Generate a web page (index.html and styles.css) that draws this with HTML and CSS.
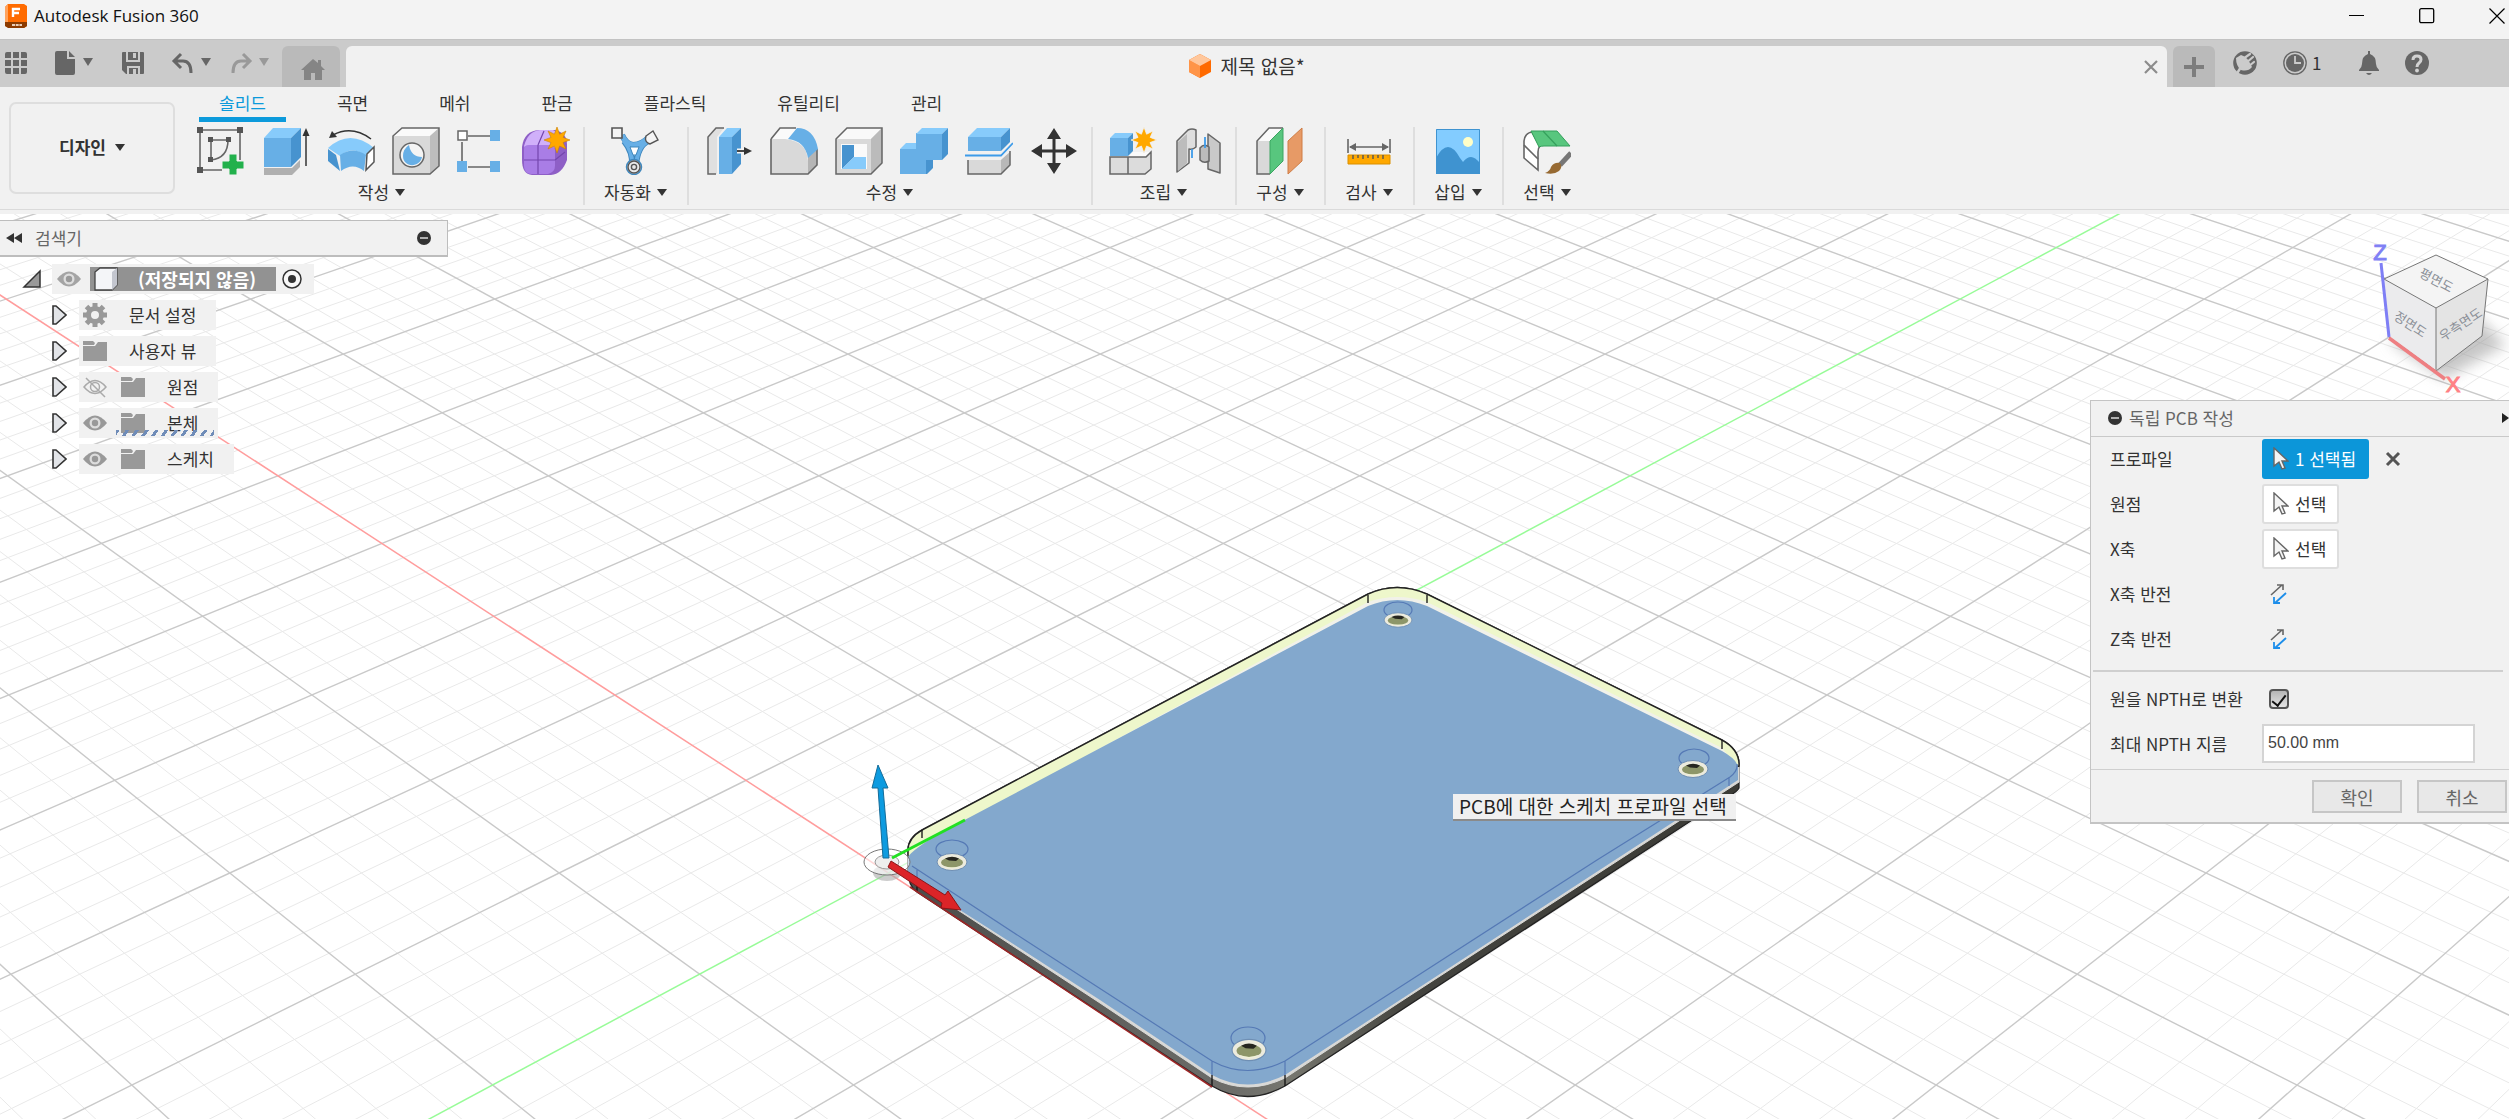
FILE: index.html
```html
<!DOCTYPE html>
<html lang="ko">
<head>
<meta charset="utf-8">
<title>Autodesk Fusion 360</title>
<link rel="stylesheet" href="styles.css">
</head>
<body>
<header class="titlebar">
  <svg class="app-logo" viewBox="0 0 22 24"><path d="M3 0h16l3 2v20l-3 2H5l-5-2V3z" fill="#ff6b00"/><path d="M0 3l3-3v18l-3 2z" fill="#ffa25c"/><path d="M0 18h22v4l-3 2H3l-3-2z" fill="#8c3a00"/><path d="M8 13V5h7M8 9h6" stroke="#fff" stroke-width="2.400" fill="none"/><path d="M7 21h10" stroke="#e8cdb8" stroke-width="2" stroke-dasharray="3 .7"/></svg>
  <h1 class="app-name">Autodesk Fusion 360</h1>
  <div class="window-buttons">
    <button class="plain" aria-label="최소화"><svg class="i16" viewBox="0 0 16 16"><path d="M0 7.500h15" stroke="#000"/></svg></button>
    <button class="plain" aria-label="최대화"><svg class="i16" viewBox="0 0 16 16"><rect x=".7" y=".7" width="14" height="14" rx="1.500" fill="none" stroke="#000" stroke-width="1.300"/></svg></button>
    <button class="plain" aria-label="닫기"><svg class="i16" viewBox="0 0 16 16"><path d="M.5.5l15 15M15.500.5l-15 15" stroke="#000" stroke-width="1.200"/></svg></button>
  </div>
</header>

<div class="tabbar">
  <div class="quick">
    <button class="plain" aria-label="앱"><svg class="i24" viewBox="0 0 24 24" fill="#666"><path d="M3 1h4v6H1V3a2 2 0 0 1 2-2zM9 1h6v6H9zM17 1h4a2 2 0 0 1 2 2v4h-6zM1 9h6v6H1zM9 9h6v6H9zM17 9h6v6h-6zM1 17h6v6H3a2 2 0 0 1-2-2zM9 17h6v6H9zM17 17h6v4a2 2 0 0 1-2 2h-4z"/></svg></button>
    <button class="plain pair file" aria-label="파일"><svg class="i24" viewBox="0 0 24 24"><path d="M2 2q0-2 2-2h10v8h8v14q0 2-2 2H4q-2 0-2-2zM16 0l6 6h-6z" fill="#666"/></svg><span class="caret"></span></button>
    <button class="plain save" aria-label="저장"><svg class="i24" viewBox="0 0 24 24"><path d="M2 1h20a1 1 0 0 1 1 1v20a1 1 0 0 1-1 1H5l-4-4V2a1 1 0 0 1 1-1z" fill="#666"/><path d="M6 1v9h12V1M7 23v-7h11v7" fill="none" stroke="#cbcbcb" stroke-width="2"/><path d="M12 18h3v5h-3zM12 2h3v5h-3z" fill="#cbcbcb"/></svg></button>
    <button class="plain pair undo" aria-label="실행 취소"><svg class="i24" viewBox="0 0 24 24"><path d="M10 3L3 10l7 7M4 10h8q8 0 8 12" fill="none" stroke="#666" stroke-width="3"/></svg><span class="caret"></span></button>
    <button class="plain pair redo" aria-label="다시 실행"><svg class="i24" viewBox="0 0 24 24"><path d="M14 3l7 7-7 7M20 10h-8q-8 0-8 12" fill="none" stroke="#999" stroke-width="3"/></svg><span class="caret caret-dim"></span></button>
  </div>
  <button class="tab-home" aria-label="홈"><svg class="i24" viewBox="0 0 24 24"><path d="M12 2L0 13h3v10h7v-7h4v7h7V13h3l-4-4V3h-3v3z" fill="#858585"/></svg></button>
  <div class="doc-tab">
    <div class="doc-title"><svg class="i24" viewBox="0 0 24 24"><path d="M12 0l11 6v12l-11 6L1 18V6z" fill="#ff6a00"/><path d="M1 6l11 6v12L1 18z" fill="#ff9447"/><path d="M12 0l11 6-11 6L1 6z" fill="#ffc79c"/></svg><span>제목 없음*</span></div>
    <button class="plain" aria-label="탭 닫기"><svg class="i16" viewBox="0 0 16 16"><path d="M2 2l12 12M14 2L2 14" stroke="#8c8c8c" stroke-width="2.200"/></svg></button>
  </div>
  <button class="tab-add" aria-label="새 탭"><svg class="i24" viewBox="0 0 24 24"><path d="M12 2v20M2 12h20" stroke="#7d7d7d" stroke-width="4"/></svg></button>
  <div class="status">
    <button class="plain" aria-label="확장"><svg class="i24" viewBox="0 0 24 24"><circle cx="12" cy="12" r="11.800" fill="#666"/><path d="M3 7L8 4q6 1 11 12-4 5-11 3-5-4-5-12z" fill="#cbcbcb"/><path d="M10 8l7-5M13 12l7-6M16 15l5-4" stroke="#cbcbcb" stroke-width="2.200" stroke-linecap="round"/><path d="M8 16l-5 8" stroke="#cbcbcb" stroke-width="2.500"/></svg></button>
    <button class="plain jobs"><svg class="i24" viewBox="0 0 24 24"><circle cx="12" cy="12" r="11.200" fill="none" stroke="#666" stroke-width="1.300"/><circle cx="12" cy="12" r="9" fill="#666"/><path d="M12 5v7h6" fill="none" stroke="#cbcbcb" stroke-width="1.800"/></svg><span>1</span></button>
    <button class="plain bell" aria-label="알림"><svg class="i24" viewBox="0 0 24 24"><path d="M11 0h2v3q6 2 6 10 0 3 3 6v1H2v-1q3-3 3-6 0-8 6-10zM9 22h6q-3 4-6 0z" fill="#666"/></svg></button>
    <button class="plain" aria-label="도움말"><svg class="i24" viewBox="0 0 24 24"><circle cx="12" cy="12" r="12" fill="#666"/><path d="M8 9q0-4 4-4t4 3.500q0 2-2 3.500-2 1.500-2 4" fill="none" stroke="#d2d2d2" stroke-width="3"/><circle cx="12" cy="19.500" r="1.900" fill="#d2d2d2"/></svg></button>
  </div>
</div>

<section class="ribbon">
  <button class="workspace">디자인 <span class="caret caret-dark"></span></button>
  <div class="tools">
    <nav class="ribbon-tabs">
      <button class="rtab rtab-on">솔리드</button><button class="rtab">곡면</button><button class="rtab">메쉬</button><button class="rtab">판금</button><button class="rtab">플라스틱</button><button class="rtab">유틸리티</button><button class="rtab">관리</button>
    </nav>
    <div class="groups">
      <div class="group group-first">
        <div class="icons">
          <svg viewBox="0 0 48 48"><path d="M3 3h40v30M3 3v40h22M14 13h17M14 13v20M31 13q0 18-17 20" fill="none" stroke="#666" stroke-width="1.600"/><path d="M0 0h6v6H0zM40 0h6v6h-6zM0 40h6v6H0zM11 10h5v5h-5zM29 10h5v5h-5zM11 30h5v5h-5z" fill="#555"/><path d="M25 34h7v-7h8v7h7v8h-7v6h-8v-6h-7z" fill="#22b14c" stroke="#f1f1f1" stroke-width="1"/></svg>
          <svg viewBox="0 0 48 48"><path d="M2 41h28l8-8v7l-8 8H2z" fill="#b0b0b0"/><path d="M2 11h27v29H2z" fill="#67afe6"/><path d="M2 11L11 1h28L29 11z" fill="#87cbfb"/><path d="M29 11L39 1v29L29 40z" fill="#4793cf"/><path d="M44 39V6" stroke="#333" stroke-width="1.500"/><path d="M44 1l3.500 8h-7z" fill="#333"/></svg>
          <svg viewBox="0 0 48 48"><path d="M1 22l8 6 4 16L1 34z" fill="#4793cf"/><path d="M1 21q22-20 46 0l-8 8q-14-11-26 0z" fill="#87cbfb"/><path d="M13 28q13-9 26 0l-2 16q-11-9-23 0z" fill="#67afe6"/><path d="M40 27l7-7v15l-8 8z" fill="#fff" stroke="#555" stroke-width="1.500"/><path d="M6 8q19-10 38 4" fill="none" stroke="#333" stroke-width="1.500"/><path d="M2 11l3-7 5 6z" fill="#333"/></svg>
          <svg viewBox="0 0 48 48"><path d="M1 9L10 1h37v38l-9 8H1z" fill="#d9d9d9"/><path d="M1 9L10 1h37l-9 8z" fill="#fafafa"/><path d="M38 9l9-8v38l-9 8z" fill="#bdbdbd"/><path d="M1 9L10 1h37v38l-9 8H1z" fill="none" stroke="#666" stroke-width="1.500"/><ellipse cx="20" cy="28" rx="12" ry="12" fill="#f4f4f4" stroke="#666" stroke-width="1.500"/><path d="M17 18q2 12 13 12c-2 11-19 11-19-1q0-7 6-11z" fill="#67afe6"/></svg>
          <svg viewBox="0 0 48 48"><path d="M11 9h22M5 15v20M11 40h22" stroke="#666" stroke-width="1.600"/><path d="M1 4h9v9H1z" fill="#fff" stroke="#666" stroke-width="1.500"/><path d="M33 3h10v11H33zM0 34h10v11H0zM33 34h10v11H33z" fill="#67afe6"/></svg>
          <svg viewBox="0 0 48 48"><path d="M0 20Q2 4 17 3h16q12 3 12 14v16q-5 14-16 15H10Q0 47 0 33z" fill="#8e5fc6"/><path d="M2 19Q6 4 18 3h13q8 3 9 12l-8 6H3z" fill="#d0b0fa"/><path d="M2 22q0-4 5-4h20q6 0 6 5v16q0 6-7 8H9q-7-1-7-8z" fill="#a97de6"/><path d="M16 18v29M2 33h31M33 33l10-8M16 18l6-14" stroke="#7446ad" stroke-width="1.200" fill="none"/><path d="M35 0l2.600 7.200L44 4l-2.800 6.400L48 13l-7 2.600L44 22l-6.400-3L35 26l-2.600-7L26 22l3-6.400L22 13l7-2.600L26 4l6.400 3.200z" fill="#ffa800" stroke="#c98200" stroke-width=".6"/></svg>
        </div>
        <button class="caption">작성<span class="caret caret-dark"></span></button>
      </div>
      <div class="group group-narrow">
        <div class="icons"><svg viewBox="0 0 48 48"><path d="M11 8q4 9 11 10 9 0 16-8M13 14q9 11 8 24M38 14q-11 4-13 24" fill="none" stroke="#3f87bd" stroke-width="6"/><path d="M11 8q4 9 11 10 9 0 16-8" fill="none" stroke="#67afe6" stroke-width="5"/><path d="M13 14q9 11 8 24M38 14q-11 4-13 24" fill="none" stroke="#67afe6" stroke-width="4"/><path d="M19 20h9l-3 8h-3z" fill="#fff" stroke="#3f87bd"/><path d="M1 1h10v10H1z" fill="#f4f4f4" stroke="#555" stroke-width="1.600"/><path d="M35 9l7-5 5 9-8 4q-6-2-4-8z" fill="#f4f4f4" stroke="#555" stroke-width="1.400"/><circle cx="23" cy="40" r="7.500" fill="#ddd" stroke="#3f87bd" stroke-width="1.500"/><circle cx="23" cy="40" r="6" fill="#e9e9e9" stroke="#555" stroke-width="1.400"/><circle cx="23" cy="40" r="2.600" fill="none" stroke="#555" stroke-width="1.400"/></svg></div>
        <button class="caption">자동화<span class="caret caret-dark"></span></button>
      </div>
      <div class="group">
        <div class="icons">
          <svg viewBox="0 0 48 48"><path d="M3 10l8-9h8l-7 9v37H3z" fill="#e0e0e0"/><path d="M11 47H3V10l8-9h8" fill="none" stroke="#666" stroke-width="1.500"/><path d="M14 10h13v37H14z" fill="#67afe6"/><path d="M14 10l8-9h14l-9 9z" fill="#87cbfb"/><path d="M27 10l9-9v36l-9 10z" fill="#4793cf"/><path d="M32 24h11" stroke="#f4f4f4" stroke-width="5"/><path d="M32 24h10" stroke="#333" stroke-width="1.800"/><path d="M39 20l8 4-8 4z" fill="#333"/></svg>
          <svg viewBox="0 0 48 48"><path d="M1 11L10 1h15q20 5 22 23v14l-9 9H1z" fill="#fafafa"/><path d="M1 12h14q22 2 23 22v13H1z" fill="#d9d9d9"/><path d="M38 30l9-8v16l-9 9z" fill="#b5b5b5"/><path d="M1 12L10 1h16M47 22v16l-9 9H1V12" fill="none" stroke="#666" stroke-width="1.600"/><path d="M18 12L27 1q17 0 21 21l-10 9Q35 14 18 12z" fill="#67afe6"/></svg>
          <svg viewBox="0 0 48 48"><path d="M1 12L12 1h35v35L36 47H1z" fill="#d9d9d9"/><path d="M1 12L12 1h35L36 12z" fill="#f9f9f9"/><path d="M36 12L47 1v35L36 47z" fill="#bbb"/><path d="M1 12L12 1h35v35L36 47H1z" fill="none" stroke="#666" stroke-width="1.500"/><path d="M6 17h26v25H6z" fill="#fafafa"/><path d="M7 18h12v12L7 42z" fill="#4793cf"/><path d="M7 42l12-12h12v12z" fill="#87cbfb"/></svg>
          <svg viewBox="0 0 48 48"><path d="M0 22h16V6h26v27H26v14H0z" fill="#67afe6"/><path d="M16 7l6-6h26l-6 6zM0 22l6-6h10v6z" fill="#87cbfb"/><path d="M42 7l6-6v26l-6 6zM26 33h7v8l-6 6h-1z" fill="#4793cf"/></svg>
          <svg viewBox="0 0 48 48"><path d="M3 33h33l9-8v13l-9 9H3z" fill="#d9d9d9"/><path d="M36 33l9-8v13l-9 9z" fill="#b8b8b8"/><path d="M3 33v14h33l9-9V24" fill="none" stroke="#666" stroke-width="1.500"/><path d="M3 10h33v14H3z" fill="#67afe6"/><path d="M3 10l9-9h33l-9 9z" fill="#87cbfb"/><path d="M36 10l9-9v14l-9 9z" fill="#4793cf"/><path d="M0 28.500h36L48 16" fill="none" stroke="#3d9be9" stroke-width="1.800"/></svg>
          <svg viewBox="0 0 48 48"><path d="M24 8v32M8 24h32" stroke="#333" stroke-width="3"/><path d="M24 1l7 11H17zM24 47l-7-11h14zM1 24l11-7v14zM47 24l-11 7V17z" fill="#333"/></svg>
        </div>
        <button class="caption">수정<span class="caret caret-dark"></span></button>
      </div>
      <div class="group">
        <div class="icons">
          <svg viewBox="0 0 48 48"><path d="M1 30h36l5-5v17l-6 5H1z" fill="#dcdcdc"/><path d="M19 30l5-5h18l-5 5z" fill="#fafafa"/><path d="M1 30h36l5-5v17l-6 5H1zM19 30v17" fill="none" stroke="#666" stroke-width="1.500"/><path d="M1 11h18v18H1z" fill="#67afe6"/><path d="M1 11l5-5h18l-5 5z" fill="#87cbfb"/><path d="M19 11l5-5v18l-5 5z" fill="#4793cf"/><path d="M35 0l2.600 7.200L44 4l-2.800 6.400L48 13l-7 2.600L44 22l-6.400-3L35 26l-2.600-7L26 22l3-6.400L22 13l7-2.600L26 4l6.400 3.200z" fill="#ffa800" stroke="#f1f1f1" stroke-width=".8"/></svg>
          <svg viewBox="0 0 48 48"><path d="M3 14L14 3q4-2 8 0v17q-3 3-7 2v14L3 45z" fill="#dedede" stroke="#666" stroke-width="1.500" stroke-linejoin="round"/><path d="M4 15l9-8v29l-9 8z" fill="#bcbcbc"/><path d="M46 16L34 7v35l12 4z" fill="#c9c9c9" stroke="#666" stroke-width="1.500" stroke-linejoin="round"/><path d="M26 21q4-5 9-1v14q-5 3-9-1z" fill="#bcbcbc" stroke="#666" stroke-width="1.500"/><path d="M18 22v9M31 10v11" stroke="#3d9be9" stroke-width="1.800"/></svg>
        </div>
        <button class="caption">조립<span class="caret caret-dark"></span></button>
      </div>
      <div class="group group-narrow">
        <div class="icons"><svg viewBox="0 0 48 48"><path d="M1 14L13 1h14v33L14 47H1z" fill="#fafafa"/><path d="M1 14h13v33H1z" fill="#d9d9d9"/><path d="M14 47H1V14L13 1h14" fill="none" stroke="#666" stroke-width="1.500"/><path d="M14 14L27 1v33L14 47z" fill="#58c67e" stroke="#3ba561"/><path d="M32 14L46 1v33L32 47z" fill="#e79a66" stroke="#cf7d45"/></svg></div>
        <button class="caption">구성<span class="caret caret-dark"></span></button>
      </div>
      <div class="group group-narrow">
        <div class="icons"><svg viewBox="0 0 48 48"><path d="M3 12v14M45 12v14M5 20h38" stroke="#666" stroke-width="1.600"/><path d="M4 20l7-4v8zM44 20l-7-4v8z" fill="#666"/><path d="M3 28h42v9H3z" fill="#ffa800" stroke="#d98f00"/><path d="M8 28v4M13 28v3M18 28v4M23 28v3M28 28v4M33 28v3M38 28v4" stroke="#555" stroke-width="1.400"/></svg></div>
        <button class="caption">검사<span class="caret caret-dark"></span></button>
      </div>
      <div class="group group-narrow">
        <div class="icons"><svg viewBox="0 0 48 48"><path d="M2 2h44v45H2z" fill="#83ccff"/><path d="M2 31q12-22 24 0l3 4q4-5 8-5 4 0 9 6v11H2z" fill="#3f93d0"/><circle cx="34" cy="15" r="5" fill="#ffffc8"/><path d="M2.500 2.500h43v44h-43z" fill="none" stroke="#3f93d0"/></svg></div>
        <button class="caption">삽입<span class="caret caret-dark"></span></button>
      </div>
      <div class="group group-narrow group-last">
        <div class="icons"><svg viewBox="0 0 48 48"><path d="M1 31V14q1-8 8-9l8 14q-2 2-2 6v18z" fill="#fff" stroke="#666" stroke-width="1.600"/><path d="M1 18l14 14" stroke="#666" stroke-width="1.600"/><path d="M8 4h26l13 15H21q-3 0-5 1z" fill="#58c67e" stroke="#35a05c"/><path d="M20 4l14 15" stroke="#35a05c" stroke-width="1.200"/><path d="M48 26L37 38" stroke="#777" stroke-width="5"/><path d="M22 46q5-2 6-6 3-5 9-4 3 4-1 8-5 4-14 2z" fill="#976a32"/></svg></div>
        <button class="caption">선택<span class="caret caret-dark"></span></button>
      </div>
    </div>
  </div>
</section>

<main class="viewport">
  <svg class="scene" viewBox="0 214 2509 905" preserveAspectRatio="xMinYMin slice">
    <defs>
      <linearGradient id="rim" x1="0" x2="1"><stop offset="0" stop-color="#4c4c4a"/><stop offset=".4" stop-color="#6e6e6a"/><stop offset=".46" stop-color="#77776f"/><stop offset=".6" stop-color="#44443f"/><stop offset="1" stop-color="#3b3b36"/></linearGradient>
      <g id="hole"><ellipse rx="15" ry="8.500" fill="#ecebdd" stroke="#6f8fb4"/><ellipse cy=".5" rx="11" ry="5" fill="#8d9669"/><path d="M-7-3.500Q0-7 7-3.500L4-1-3-1.500z" fill="#26261f"/><path d="M-9 4Q0 8 9 4 0 7-9 4z" fill="#f6ffd0"/></g>
    </defs>
    <g id="grid-minor" stroke="#e9e9e9"></g>
    <g id="grid-major" stroke="#c9c9c9" stroke-width="1.400"></g>
    <g id="axes" stroke-width="1.500"></g>
    <path d="M908 870V850Q908 838 922 830L1368 594Q1397 581 1427 594L1722 740Q1740 750 1739 766V788Q1737 792 1729 796L1285 1086Q1247 1107 1212 1086L917 892Q908 886 908 870z" fill="url(#rim)" stroke="#222" stroke-width="1.300"/>
    <path d="M908 870V850Q908 838 922 830L1368 594Q1397 581 1427 594L1722 740Q1740 750 1739 766V782L1400 1002 1285 1078Q1247 1096 1212 1078L1100 1003 912 880z" fill="#d9d9d7" stroke="#d9d9d7"/>
    <path d="M908 866V850Q908 838 922 830L1368 594Q1397 581 1427 594L1722 740Q1740 750 1739 766L1560 800 1100 860z" fill="#eef7cb" stroke="#222" stroke-width="1.500"/>
    <path d="M911 856L965 822 1368 602Q1397 592 1427 602L1722 748 1735 764 1560 800 1000 860z" fill="#f1f1ea"/>
    <path d="M908 857Q912 850 940 833L1368 606Q1397 594 1427 606L1722 751Q1738 760 1738 768V780L1615 860 1400 1000 1285 1075Q1247 1094 1212 1075L1100 1000 1007 940 908 877z" fill="#83a8cd"/>
    <g fill="none" stroke="#5579b5" stroke-width="1.200"><path d="M912 866L1025 940 1212 1061Q1247 1080 1285 1061L1400 987 1597 860 1730 777Q1738 771 1737 764M1212 1061v14M1285 1061v14M1729 777v9M917 870v14"/><ellipse cx="952" cy="849" rx="16" ry="9"/><ellipse cx="1398" cy="610" rx="14" ry="8"/><ellipse cx="1694" cy="758" rx="15" ry="9"/><ellipse cx="1248" cy="1038" rx="17" ry="11"/></g>
    <path d="M1212 1075v11M1285 1075v11M917 884v8M922 830v8M1368 595v8M1427 595v8M1722 740v9" stroke="#111" stroke-width="1.300"/>
    <path d="M910 887L1212 1087" stroke="#9c2626" stroke-width="1.500"/>
    <use href="#hole" x="952" y="862"/><use href="#hole" transform="translate(1398 620) scale(.93 .85)"/><use href="#hole" x="1693" y="769"/><use href="#hole" transform="translate(1249 1050) scale(1.130 1.250)"/>
    <g>
      <ellipse cx="887" cy="873" rx="14" ry="8" fill="#aaa" opacity=".6"/><ellipse cx="887" cy="862" rx="23" ry="13" fill="#fff" fill-opacity=".6" stroke="#777"/><ellipse cx="887" cy="862" rx="12" ry="7" fill="#eee" stroke="#999"/>
      <path d="M892 858L965 820" stroke="#22e022" stroke-width="3"/>
      <path d="M883 858l-5-70h-6l6-23 10 23h-5l6 70z" fill="#0d9be0" stroke="#146c99"/>
      <path d="M891 861l54 34 3-4 13 19-20-2 1-5-54-36z" fill="#db2428" stroke="#8b1518"/>
    </g>
  </svg>

  <svg class="viewcube" viewBox="0 0 140 160">
    <defs><filter id="soft" x="-30%" y="-50%" width="160%" height="200%"><feGaussianBlur stdDeviation="7"/></filter></defs>
    <path d="M20 112l55 38 62-34-30-30z" fill="#999" opacity=".55" filter="url(#soft)"/>
    <path d="M67 26l52 24-52 29L15 50z" fill="#f4f4f4"/><path d="M15 50l52 29v63l-47-34z" fill="#ebebed"/><path d="M67 79l52-29-6 57-46 35z" fill="#e4e4e4"/>
    <path d="M67 26l52 24-52 29L15 50zM67 79v63M119 50l-6 57-46 35-47-34" fill="none" stroke="#777"/>
    <path d="M12 34l8 74" stroke="#7f7ff5" stroke-width="3"/><path d="M20 109l56 41" stroke="#ee7f82" stroke-width="3.500"/>
    <g class="cube-text"><text x="67" y="56" transform="rotate(28 67 52)">평면도</text><text x="41" y="100" transform="rotate(33 41 96)">정면도</text><text x="92" y="100" transform="rotate(-33 92 96)">우측면도</text></g>
    <text class="axis-z" x="11" y="31">Z</text><text class="axis-x" x="84" y="163">X</text>
  </svg>

  <aside class="browser">
    <div class="browser-head">
      <svg class="i16" viewBox="0 0 16 16"><path d="M8 3v10L0 8zM16 3v10L8 8z" fill="#333"/></svg>
      <h2>검색기</h2>
      <svg class="i16" viewBox="0 0 16 16"><circle cx="8" cy="8" r="7" fill="#333"/><path d="M4 8h8" stroke="#ddd" stroke-width="1.500"/></svg>
    </div>
    <ul class="tree">
      <li class="node node-root"><svg class="i20" viewBox="0 0 20 20"><path d="M2 18L18 2v16z" fill="#999" stroke="#333" stroke-width="1.500"/></svg>
        <span class="chip"><svg class="i24" viewBox="0 0 24 24"><path d="M0 12Q12-3 24 12 12 27 0 12z" fill="#a4a4a4"/><circle cx="12" cy="12" r="5.500" fill="#ddd"/><circle cx="12" cy="12" r="3.200" fill="#999"/></svg><span class="root-name"><svg class="i24" viewBox="0 0 24 24"><path d="M1 5l5-4h17v17l-5 5H1z" fill="#f4f5f8" stroke="#444" stroke-width="1.300"/><path d="M18 5l5-4v17l-5 5z" fill="#c3c6cf"/></svg><b>(저장되지 않음)</b></span><svg class="i20" viewBox="0 0 20 20"><circle cx="10" cy="10" r="9" fill="#f8f8f8" stroke="#333" stroke-width="1.500"/><circle cx="10" cy="10" r="4" fill="#333"/></svg></span></li>
      <li class="node"><svg class="arrow" viewBox="0 0 15 20"><path d="M1 1h3l10 9-10 9H1z" fill="#e2e4e8" stroke="#333" stroke-width="1.600"/></svg><span class="chip"><svg class="i24" viewBox="0 0 24 24"><circle cx="12" cy="12" r="6.500" fill="none" stroke="#999" stroke-width="5"/><path d="M12 0v4M12 20v4M0 12h4M20 12h4M3.500 3.500l3 3M17.500 17.500l3 3M20.500 3.500l-3 3M3.500 20.500l3-3" stroke="#999" stroke-width="5"/></svg><span>문서 설정</span></span></li>
      <li class="node"><svg class="arrow" viewBox="0 0 15 20"><path d="M1 1h3l10 9-10 9H1z" fill="#e2e4e8" stroke="#333" stroke-width="1.600"/></svg><span class="chip"><svg class="i24" viewBox="0 0 24 24"><path d="M0 2h10l2 2-1 2H0zM0 7h12l3-4h9v19H0z" fill="#999"/></svg><span>사용자 뷰</span></span></li>
      <li class="node"><svg class="arrow" viewBox="0 0 15 20"><path d="M1 1h3l10 9-10 9H1z" fill="#e2e4e8" stroke="#333" stroke-width="1.600"/></svg><span class="chip"><svg class="i24" viewBox="0 0 24 24"><path d="M1 12Q12-1 23 12 12 25 1 12zM3 3l19 19" fill="none" stroke="#aaa" stroke-width="1.500"/><circle cx="12" cy="12" r="4.500" fill="none" stroke="#aaa" stroke-width="1.500"/></svg><svg class="i24 folder" viewBox="0 0 24 24"><path d="M0 2h10l2 2-1 2H0zM0 7h12l3-4h9v19H0z" fill="#999"/></svg><span>원점</span></span></li>
      <li class="node"><svg class="arrow" viewBox="0 0 15 20"><path d="M1 1h3l10 9-10 9H1z" fill="#e2e4e8" stroke="#333" stroke-width="1.600"/></svg><span class="chip chip-marked"><svg class="i24" viewBox="0 0 24 24"><path d="M0 12Q12-3 24 12 12 27 0 12z" fill="#999"/><circle cx="12" cy="12" r="5.500" fill="#ddd"/><circle cx="12" cy="12" r="3.200" fill="#999"/></svg><svg class="i24 folder" viewBox="0 0 24 24"><path d="M0 2h10l2 2-1 2H0zM0 7h12l3-4h9v19H0z" fill="#999"/></svg><span>본체</span></span></li>
      <li class="node"><svg class="arrow" viewBox="0 0 15 20"><path d="M1 1h3l10 9-10 9H1z" fill="#e2e4e8" stroke="#333" stroke-width="1.600"/></svg><span class="chip"><svg class="i24" viewBox="0 0 24 24"><path d="M0 12Q12-3 24 12 12 27 0 12z" fill="#999"/><circle cx="12" cy="12" r="5.500" fill="#ddd"/><circle cx="12" cy="12" r="3.200" fill="#999"/></svg><svg class="i24 folder" viewBox="0 0 24 24"><path d="M0 2h10l2 2-1 2H0zM0 7h12l3-4h9v19H0z" fill="#999"/></svg><span>스케치</span></span></li>
    </ul>
  </aside>

  <form class="dialog">
    <div class="dialog-head"><svg class="i16" viewBox="0 0 16 16"><circle cx="8" cy="8" r="7" fill="#333"/><path d="M4 8h8" stroke="#ddd" stroke-width="1.500"/></svg><h2>독립 PCB 작성</h2><svg class="expand" viewBox="0 0 7 12"><path d="M0 1v10l7-5z" fill="#222"/></svg></div>
    <div class="fields">
      <div class="field"><label for="profile">프로파일</label><button type="button" id="profile" class="pick pick-on"><svg class="cursor" viewBox="0 0 16 24"><path d="M1 1v18l5-4 3 7 3-1-3-7h6z" fill="#f4f4f4" stroke="#666" stroke-width="1.400"/></svg>1 선택됨</button><button type="button" class="plain clear" aria-label="지우기"><svg class="i16" viewBox="0 0 16 16"><path d="M2 2l12 12M14 2L2 14" stroke="#555" stroke-width="3"/></svg></button></div>
      <div class="field"><label for="origin">원점</label><button type="button" id="origin" class="pick"><svg class="cursor" viewBox="0 0 16 24"><path d="M1 1v18l5-4 3 7 3-1-3-7h6z" fill="#f4f4f4" stroke="#666" stroke-width="1.400"/></svg>선택</button></div>
      <div class="field"><label for="xaxis">X축</label><button type="button" id="xaxis" class="pick"><svg class="cursor" viewBox="0 0 16 24"><path d="M1 1v18l5-4 3 7 3-1-3-7h6z" fill="#f4f4f4" stroke="#666" stroke-width="1.400"/></svg>선택</button></div>
      <div class="field"><label for="flipx">X축 반전</label><button type="button" id="flipx" class="plain flip"><svg class="i20" viewBox="0 0 20 20"><path d="M2 11L13 1M8 1h6v5" fill="none" stroke="#666" stroke-width="1.600"/><path d="M17 9L6 19M5 13v6h6" fill="none" stroke="#1d8eea" stroke-width="1.800"/></svg></button></div>
      <div class="field"><label for="flipz">Z축 반전</label><button type="button" id="flipz" class="plain flip"><svg class="i20" viewBox="0 0 20 20"><path d="M2 11L13 1M8 1h6v5" fill="none" stroke="#666" stroke-width="1.600"/><path d="M17 9L6 19M5 13v6h6" fill="none" stroke="#1d8eea" stroke-width="1.800"/></svg></button></div>
    </div>
    <div class="fields fields-more">
      <div class="field"><label for="npth">원을 NPTH로 변환</label><input type="checkbox" id="npth" class="tick" checked></div>
      <div class="field"><label for="dia">최대 NPTH 지름</label><input type="text" id="dia" class="entry" value="50.00 mm"></div>
    </div>
    <div class="actions"><button type="button" class="action">확인</button><button type="button" class="action">취소</button></div>
  </form>

  <div class="tooltip" role="tooltip">PCB에 대한 스케치 프로파일 선택</div>
</main>
<script src="grid.js"></script>
</body>
</html>
```
FILE: grid.js
```js
// Perspective ground plane: u runs along the red axis, v along the green one.
const project = (u, v) => {
  const w = 1 + 0.0436 * (v - u);
  return [(888.5 + 110 * u + 219.4 * v) / w, (873 + 58.7 * (u - v)) / w];
};
const addLine = (parent, from, to, stroke) => {
  const line = document.createElementNS('http://www.w3.org/2000/svg', 'line');
  const [x1, y1] = project(...from);
  const [x2, y2] = project(...to);
  Object.entries({ x1, y1, x2, y2 }).forEach(([k, n]) => line.setAttribute(k, n.toFixed(1)));
  if (stroke) line.setAttribute('stroke', stroke);
  parent.appendChild(line);
};
const minor = document.getElementById('grid-minor');
const major = document.getElementById('grid-major');
const axes = document.getElementById('axes');
for (let i = -70; i <= 70; i++) {
  if (i === 0) continue;
  const layer = i % 5 === 0 ? major : minor;
  if (i <= 60) addLine(layer, [i / 5, -8], [i / 5, 14]);
  if (i >= -40) addLine(layer, [-14, i / 5], [12, i / 5]);
}
addLine(axes, [-14, 0], [12, 0], '#ff9d9d');
addLine(axes, [0, -8], [0, 14], '#98fb98');
```
FILE: styles.css
```css
* { box-sizing: border-box; }
body {
  margin: 0;
  min-height: 100vh;
  display: flex;
  flex-direction: column;
  overflow: hidden;
  background: #f1f1f1;
  color: #333;
  font: 17px/24px "Noto Sans CJK KR", "Noto Sans", sans-serif;
}
button { font: inherit; color: inherit; margin: 0; padding: 0; cursor: pointer; }
h1, h2 { margin: 0; font: inherit; }
svg { display: block; flex: none; }
.plain { border: 0; background: none; display: flex; align-items: center; }
.i16 { width: 16px; height: 16px; }
.i20 { width: 20px; height: 20px; }
.i24 { width: 24px; height: 24px; }
.caret { border: 5px solid transparent; border-top: 8px solid #666; border-bottom: 0; }
.caret-dim { border-top-color: #999; }
.caret-dark { border-top-color: #333; border-top-width: 7px; }

.titlebar { display: flex; align-items: center; height: 39px; padding: 0 4px 8px 5px; background: #f3f3f3; }
.app-logo { width: 22px; height: 24px; }
.app-name { margin-left: 7px; font: 17px/24px "Open Sans", "Noto Sans", sans-serif; color: #111; }
.window-buttons { margin-left: auto; display: flex; gap: 54px; }

.tabbar { display: flex; height: 48px; align-items: stretch; padding-top: 6px; background: #cbcbcb; border-top: 1px solid #c2c2c2; }
.quick { display: flex; align-items: center; width: 282px; padding: 0 0 8px 4px; }
.pair { gap: 6px; }
.pair .caret { margin-top: -2px; }
.file { margin-left: 25px; }
.save { margin-left: 28px; }
.undo { margin-left: 26px; }
.redo { margin-left: 18px; }
.tab-home, .tab-add { flex-shrink: 0; display: flex; align-items: center; justify-content: center; border: 0; border-radius: 6px 6px 0 0; background: #bababa; }
.tab-home { width: 58px; margin-right: 6px; padding: 4px 0 0 4px; }
.tab-add { width: 42px; margin-left: 6px; }
.doc-tab { flex: 1; display: flex; align-items: center; padding-right: 8px; border-radius: 6px 6px 0 0; background: #f1f1f1; }
.doc-title { flex: 1; display: flex; justify-content: center; align-items: center; gap: 8px; font-size: 19px; padding: 0 0 2px 4px; }
.status { display: flex; align-items: center; width: 294px; padding: 0 0 8px 18px; }
.jobs { margin-left: 26px; gap: 5px; }
.bell { margin: 0 24px 0 36px; }

.ribbon { display: flex; height: 123px; border-bottom: 1px solid #dadada; background: #f1f1f1; }
.workspace { width: 166px; height: 92px; margin: 15px 22px 0 9px; padding-bottom: 2px; border: 2px solid #dedede; border-radius: 7px; background: #f1f1f1; font-weight: bold; display: flex; align-items: center; justify-content: center; gap: 9px; }
.ribbon-tabs { display: flex; gap: 31px; padding-left: 2px; height: 35px; }
.rtab { border: 0; border-bottom: 5px solid transparent; background: none; padding: 4px 20px 2px; line-height: 24px; }
.rtab-on { color: #0c9adb; border-bottom-color: #0c9adb; }
.groups { display: flex; padding-top: 5px; }
.group { height: 78px; padding: 0 13px 0 16px; border-right: 2px solid #dedede; display: flex; flex-direction: column; align-items: center; }
.group-first { padding-left: 0; }
.group-narrow { padding: 0 20px 0 19px; }
.group-last { border-right: 0; }
.icons { display: flex; gap: 17px; }
.icons svg { width: 48px; height: 48px; }
.caption { border: 0; background: none; display: flex; align-items: center; gap: 6px; margin: 5px 4px 0 0; line-height: 24px; white-space: nowrap; }
.group-narrow .caption { margin-right: 0; }

.viewport { position: relative; flex: 1; margin-top: 4px; background: #fff; overflow: hidden; }
.scene { position: absolute; inset: 0; width: 100%; height: 100%; fill: none; }
.viewcube { position: absolute; right: 0; top: 15px; width: 140px; height: 160px; overflow: visible; }
.cube-text { font: 13px "Noto Sans CJK KR", sans-serif; fill: #8b9098; text-anchor: middle; }
.axis-z, .axis-x { font: 22px "Liberation Sans", sans-serif; text-anchor: middle; fill: #7f7ff5; stroke: #7f7ff5; }
.axis-x { fill: #ff8084; stroke: #ff8084; }

.browser { position: absolute; left: 0; top: 6px; width: 448px; }
.browser-head { display: flex; align-items: center; height: 37px; padding: 0 15px 0 6px; border: 1px solid #bdbdbd; border-left: 0; border-bottom-width: 2px; background: #f1f1f1; color: #666; }
.browser-head h2 { flex: 1; margin-left: 13px; }
.tree { list-style: none; margin: 7px 0 0; padding: 0; display: flex; flex-direction: column; gap: 6px; align-items: flex-start; }
.node { display: flex; align-items: center; gap: 12px; height: 30px; padding-left: 52px; }
.node-root { padding-left: 22px; gap: 10px; }
.arrow { width: 15px; height: 20px; }
.chip { display: flex; align-items: center; height: 30px; gap: 22px; padding: 0 20px 0 4px; background: #f1f1f1; }
.chip .folder { margin-left: -8px; }
.node-root .chip { gap: 6px; padding: 0 12px 0 5px; }
.root-name { display: flex; align-items: center; gap: 20px; height: 24px; margin-left: 3px; padding: 0 20px 0 4px; background: #929292; color: #fff; font-size: 18px; }
.chip-marked { position: relative; }
.chip-marked::after { content: ""; position: absolute; left: 37px; right: 4px; bottom: 2px; height: 6px; background: repeating-linear-gradient(125deg, #6f8cb8 0 3px, transparent 3px 8px); }

.dialog { position: absolute; right: 0; top: 186px; width: 419px; border: 1px solid #c4c4c4; border-right: 0; border-bottom-width: 2px; background: #f1f1f1; }
.dialog-head { display: flex; align-items: center; height: 36px; padding: 0 0 2px 16px; border-bottom: 1px solid #c9c9c9; color: #666; }
.dialog-head h2 { flex: 1; margin-left: 6px; }
.expand { width: 7px; height: 12px; }
.fields { padding: 0 0 8px; margin: 0 6px 0 2px; border-bottom: 2px solid #cfcfcf; }
.fields-more { margin: 0; padding: 5px 0 2px 2px; border-bottom-width: 1px; }
.field { display: flex; align-items: center; height: 45px; padding: 0 0 2px 17px; }
.field label { width: 152px; }
.pick { display: flex; align-items: center; gap: 6px; height: 40px; padding: 0 11px 0 9px; border: 2px solid #dedede; border-radius: 3px; background: #fff; }
.pick-on { border-color: #0c96d9; background: #0c96d9; color: #fff; }
.cursor { width: 16px; height: 24px; }
.clear { margin-left: 16px; }
.flip { margin-left: 7px; }
.tick { appearance: none; width: 20px; height: 20px; margin: 0 0 0 7px; border: 2px solid #555; border-radius: 4px; background: linear-gradient(#b5b5b5, #e4e4e4); display: grid; place-items: center; }
.tick:checked::after { content: ""; width: 6px; height: 12px; border: solid #111; border-width: 0 2px 2px 0; transform: rotate(38deg); }
.entry { width: 213px; height: 39px; padding: 0 4px 2px; border: 2px solid #d4d4d4; background: #fff; color: #444; font: 16px "Liberation Sans", Arial, sans-serif; }
.actions { display: flex; justify-content: flex-end; gap: 15px; padding: 10px 2px 9px; }
.action { width: 90px; height: 33px; border: 2px solid #c6c6c6; background: #e8e8e8; color: #666; font-size: 18px; line-height: 24px; }

.tooltip { position: absolute; left: 1453px; top: 580px; height: 27px; padding: 0 9px 0 6px; border-bottom: 2px solid #8a8a8a; background: #f0f0f0; color: #222; font-size: 19px; line-height: 24px; white-space: nowrap; }
```
